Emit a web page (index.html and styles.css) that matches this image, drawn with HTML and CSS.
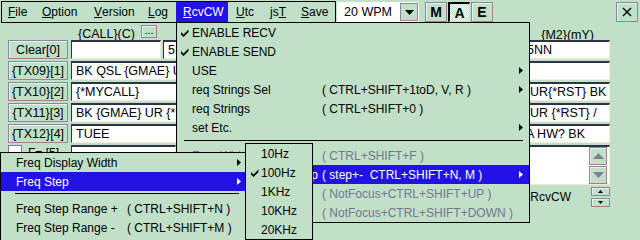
FILE: index.html
```html
<!DOCTYPE html>
<html>
<head>
<meta charset="utf-8">
<link rel="stylesheet" href="styles.css">
</head>
<body>
<div class="app">
  <header class="topbar">
    <nav class="menubar">
      <span class="mi w-file"><u>F</u>ile</span>
      <span class="mi w-option"><u>O</u>ption</span>
      <span class="mi w-version"><u>V</u>ersion</span>
      <span class="mi w-log"><u>L</u>og</span>
      <span class="mi w-rcv active"><u>R</u>cvCW</span>
      <span class="mi w-utc"><u>U</u>tc</span>
      <span class="mi w-jst">js<u>T</u></span>
      <span class="mi w-save"><u>S</u>ave</span>
    </nav>
    <div class="combo">
      <span class="combo-text">20 WPM</span>
      <span class="combo-btn"><svg width="9" height="5" viewBox="0 0 9 5"><polygon points="0,0 9,0 4.5,5" fill="#000"/></svg></span>
    </div>
    <div class="mode">
      <span class="btn mode-btn">M</span>
      <span class="btn mode-btn pressed">A</span>
      <span class="btn mode-btn">E</span>
    </div>
    <span class="btn close-btn"><svg width="10" height="10" viewBox="0 0 10 10"><path d="M1 1L9 9M9 1L1 9" stroke="#000" stroke-width="1.4"/></svg></span>
  </header>

  <main class="form">
    <div class="label-row">
      <span class="lbl-call">{CALL}(C)</span>
      <span class="btn dots">...</span>
      <span class="lbl-m2">{M2}(mY)</span>
    </div>
    <div class="row">
      <span class="btn side">Clear[0]</span>
      <span class="field f-call"></span>
      <span class="field f-rst">5NN</span>
      <span class="field f-m2">5NN</span>
    </div>
    <div class="row">
      <span class="btn side">{TX09}[1]</span>
      <span class="field f-wide">BK QSL {GMAE} UR</span>
    </div>
    <div class="row">
      <span class="btn side">{TX10}[2]</span>
      <span class="field f-wide">{*MYCALL}<span class="tail">UR{*RST} BK</span></span>
    </div>
    <div class="row">
      <span class="btn side">{TX11}[3]</span>
      <span class="field f-wide">BK {GMAE} UR {*RST}<span class="tail">UR {*RST} /</span></span>
    </div>
    <div class="row">
      <span class="btn side">{TX12}[4]</span>
      <span class="field f-wide">TUEE<span class="tail tail-a">A HW? BK</span></span>
    </div>
    <div class="row row-tall">
      <div class="chk-wrap"><span class="chk"></span><span class="chk-lbl">F= [5]</span></div>
      <span class="field f-small"></span>
      <div class="field memo">
        <div class="scroll">
          <span class="btn sbtn"><svg width="11" height="6" viewBox="0 0 11 6"><polygon points="5.5,0 11,6 0,6" fill="#7a8098"/></svg></span>
          <span class="btn sbtn"><svg width="11" height="6" viewBox="0 0 11 6"><polygon points="0,0 11,0 5.5,6" fill="#7a8098"/></svg></span>
        </div>
      </div>
    </div>
    <div class="row row-last">
      <span class="rcv-lbl">RcvCW</span>
      <div class="spin">
        <span class="btn spbtn"><svg width="5" height="3" viewBox="0 0 5 3"><polygon points="2.5,0 5,3 0,3" fill="#000"/></svg></span>
        <span class="btn spbtn"><svg width="5" height="3" viewBox="0 0 5 3"><polygon points="0,0 5,0 2.5,3" fill="#000"/></svg></span>
      </div>
    </div>
  </main>
</div>

<div class="menu dd-rcv">
  <div class="item"><span class="ck"><svg width="8" height="8" viewBox="0 0 8 8"><polygon points="0,3 2.5,5.5 7.5,0.5 7.5,3 2.5,8 0,5.5" fill="#000"/></svg></span><span class="lab">ENABLE RECV</span><span class="sc"></span><span class="ar"></span></div>
  <div class="item"><span class="ck"><svg width="8" height="8" viewBox="0 0 8 8"><polygon points="0,3 2.5,5.5 7.5,0.5 7.5,3 2.5,8 0,5.5" fill="#000"/></svg></span><span class="lab">ENABLE SEND</span><span class="sc"></span><span class="ar"></span></div>
  <div class="item"><span class="ck"></span><span class="lab">USE</span><span class="sc"></span><span class="ar"><svg width="4" height="7" viewBox="0 0 4 7"><polygon points="0,0 4,3.5 0,7" fill="#000"/></svg></span></div>
  <div class="item"><span class="ck"></span><span class="lab">req Strings Sel</span><span class="sc">( CTRL+SHIFT+1toD, V, R )</span><span class="ar"><svg width="4" height="7" viewBox="0 0 4 7"><polygon points="0,0 4,3.5 0,7" fill="#000"/></svg></span></div>
  <div class="item"><span class="ck"></span><span class="lab">req Strings</span><span class="sc">( CTRL+SHIFT+0 )</span><span class="ar"></span></div>
  <div class="item"><span class="ck"></span><span class="lab">set Etc.</span><span class="sc"></span><span class="ar"><svg width="4" height="7" viewBox="0 0 4 7"><polygon points="0,0 4,3.5 0,7" fill="#000"/></svg></span></div>
  <div class="sep sep-rcv"></div>
  <div class="item dis"><span class="ck"></span><span class="lab">Freq Width</span><span class="sc">( CTRL+SHIFT+F )</span><span class="ar"></span></div>
  <div class="item hi"><span class="ck"></span><span class="lab lab-r">Freq Step</span><span class="sc">( step+-&nbsp; CTRL+SHIFT+N, M )</span><span class="ar"><svg width="4" height="7" viewBox="0 0 4 7"><polygon points="0,0 4,3.5 0,7" fill="#fff"/></svg></span></div>
  <div class="item dis"><span class="ck"></span><span class="lab"></span><span class="sc">( NotFocus+CTRL+SHIFT+UP )</span><span class="ar"></span></div>
  <div class="item dis"><span class="ck"></span><span class="lab"></span><span class="sc">( NotFocus+CTRL+SHIFT+DOWN )</span><span class="ar"></span></div>
</div>

<div class="menu dd-freq">
  <div class="item"><span class="ck"></span><span class="lab">Freq Display Width</span><span class="sc"></span><span class="ar"><svg width="4" height="7" viewBox="0 0 4 7"><polygon points="0,0 4,3.5 0,7" fill="#000"/></svg></span></div>
  <div class="item hi"><span class="ck"></span><span class="lab">Freq Step</span><span class="sc"></span><span class="ar"><svg width="4" height="7" viewBox="0 0 4 7"><polygon points="0,0 4,3.5 0,7" fill="#fff"/></svg></span></div>
  <div class="sep sep-freq"></div>
  <div class="item"><span class="ck"></span><span class="lab">Freq Step Range +</span><span class="sc">( CTRL+SHIFT+N )</span><span class="ar"></span></div>
  <div class="item"><span class="ck"></span><span class="lab">Freq Step Range -</span><span class="sc">( CTRL+SHIFT+M )</span><span class="ar"></span></div>
</div>

<div class="menu dd-step">
  <div class="item"><span class="ck"></span><span class="lab">10Hz</span></div>
  <div class="item"><span class="ck"><svg width="8" height="8" viewBox="0 0 8 8"><polygon points="0,3 2.5,5.5 7.5,0.5 7.5,3 2.5,8 0,5.5" fill="#000"/></svg></span><span class="lab">100Hz</span></div>
  <div class="item"><span class="ck"></span><span class="lab">1KHz</span></div>
  <div class="item"><span class="ck"></span><span class="lab">10KHz</span></div>
  <div class="item"><span class="ck"></span><span class="lab">20KHz</span></div>
</div>
</body>
</html>
```

FILE: styles.css
```css
* { box-sizing: border-box; margin: 0; padding: 0; }
html, body { width: 640px; height: 240px; overflow: hidden; }
body {
  position: relative;
  background: #c0e0c8;
  font: 12px "Liberation Sans", Arial, sans-serif;
  color: #000;
}
u { text-decoration: underline; text-underline-offset: 1px; }

/* ---------- top bar ---------- */
.topbar { display: flex; align-items: flex-start; height: 23px; padding-top: 1px; }
.menubar {
  display: flex; margin-left: 1px; width: 335px; height: 22px;
  border: 1px solid #000;
}
.mi { display: flex; align-items: center; height: 20px; padding-left: 7px; white-space: nowrap; }
.w-file { width: 33px; padding-left: 6px; }
.w-option { width: 52px; }
.w-version { width: 54px; }
.w-log { width: 35px; }
.w-rcv { width: 52px; }
.w-utc { width: 35px; padding-left: 8px; }
.w-jst { width: 31px; }
.w-save { width: 40px; }
.mi.active { background: #2212e6; color: #fff; }

.combo {
  display: flex; align-items: center; justify-content: space-between;
  margin: 1px 0 0 1px; width: 82px; height: 20px;
  background: #fff; padding: 0 1px 0 7px; font-size: 12.5px;
}
.combo-btn {
  display: flex; align-items: center; justify-content: center;
  width: 18px; height: 18px; background: #c0e0c8;
  border: 1px solid; border-color: #8a86a4 #a88088 #a88088 #8a86a4;
}

.btn {
  display: flex; align-items: center; justify-content: center;
  background: #c0e0c8;
  border: 1px solid; border-color: #8a86a4 #a87e88 #a87e88 #8a86a4;
  box-shadow: inset 1px 1px 0 #e4f2e8;
  white-space: nowrap;
}
.mode { display: flex; gap: 1px; margin: 1px 0 0 6px; }
.mode-btn { width: 22px; height: 20px; font-weight: bold; font-size: 14px; }
.mode-btn.pressed {
  background: repeating-conic-gradient(#ffffff 0 25%, #c0e0c8 0 50%) 0 0 / 2px 2px;
  border-color: #000 #c0e0c8 #c0e0c8 #000;
  border-width: 2px 1px 1px 2px;
  box-shadow: none;
}
.close-btn { width: 22px; height: 20px; margin: 1px 0 0 auto; margin-right: 2px; }

/* ---------- form ---------- */
.form { padding-left: 8px; width: 610px; }
.label-row { display: flex; align-items: flex-start; height: 17px; }
.lbl-call { margin: 4px 0 0 70px; font-size: 12.5px; }
.dots { width: 16px; height: 13px; margin: 2px 0 0 6px; font-size: 11px; line-height: 8px; align-items: flex-start; }
.lbl-m2 { margin: 5px 0 0 auto; margin-right: 16px; font-size: 12.5px; }

.row { display: flex; gap: 3px; height: 19px; margin-bottom: 2px; }
.side { width: 60px; height: 19px; font-size: 12.5px; }
.field {
  display: flex; align-items: center; height: 19px;
  background: #fff; padding-left: 4px; white-space: nowrap; overflow: hidden;
  border-style: solid; border-width: 2px 1px 1px 1px;
  border-color: #303048 #f4ecd4 #f4ecd4 #303048;
  font-size: 12.5px;
}
.f-call { width: 90px; }
.f-rst { width: 357px; margin-left: -1px; }
.f-m2 { width: 88px; margin-left: -1px; }
.f-wide { width: 539px; }
.tail { margin-left: auto; width: 87px; padding-left: 8px; }
.tail-a { padding-left: 4px; }
.row-tall { height: 40px; }
.chk-wrap { display: flex; width: 60px; gap: 6px; }
.chk { width: 14px; height: 14px; background: #fff; border: 1px solid #7c7a9c; }
.chk-lbl { line-height: 16px; }
.f-small { width: 105px; }
.memo { width: 431px; height: 40px; align-items: flex-start; justify-content: flex-end; padding: 0 2px 0 0; }
.scroll { display: flex; flex-direction: column; gap: 1px; }
.sbtn { width: 18px; height: 18px; }
.row-last { height: 19px; justify-content: flex-end; align-items: center; }
.rcv-lbl { margin-right: 17px; font-size: 12px; }
.spin { display: flex; flex-direction: column; gap: 2px; }
.spbtn { width: 19px; height: 9px; }

/* ---------- menus ---------- */
.menu {
  position: absolute; background: #c0e0c8; border: 1px solid #000;
  white-space: nowrap;
}
.item { display: grid; align-items: center; height: 19px; }
.item.hi { background: #2212e6; color: #fff; }
.item.dis { color: #76768e; }
.ck { display: flex; justify-content: center; }
.ar { display: flex; justify-content: center; }
.lab-r { text-align: right; padding-right: 4px; }
.sep { height: 1px; background: #000; }

.dd-rcv { left: 176px; top: 22px; width: 354px; height: 201px; }
.dd-rcv .item { grid-template-columns: 15px 130px 1fr 16px; }
.dd-rcv .ck { padding-left: 1px; }
.sep-rcv { margin: 3px 6px 5px 7px; }

.dd-freq { left: 0; top: 152px; width: 246px; height: 92px; }
.dd-freq .item { grid-template-columns: 15px 111px 1fr 13px; }
.sep-freq { margin: 2px 6px 5px 14px; }

.dd-step { left: 245px; top: 143px; width: 68px; height: 97px; }
.dd-step .item { grid-template-columns: 15px 1fr; }
.dd-step .ck { padding-left: 2px; }
```
